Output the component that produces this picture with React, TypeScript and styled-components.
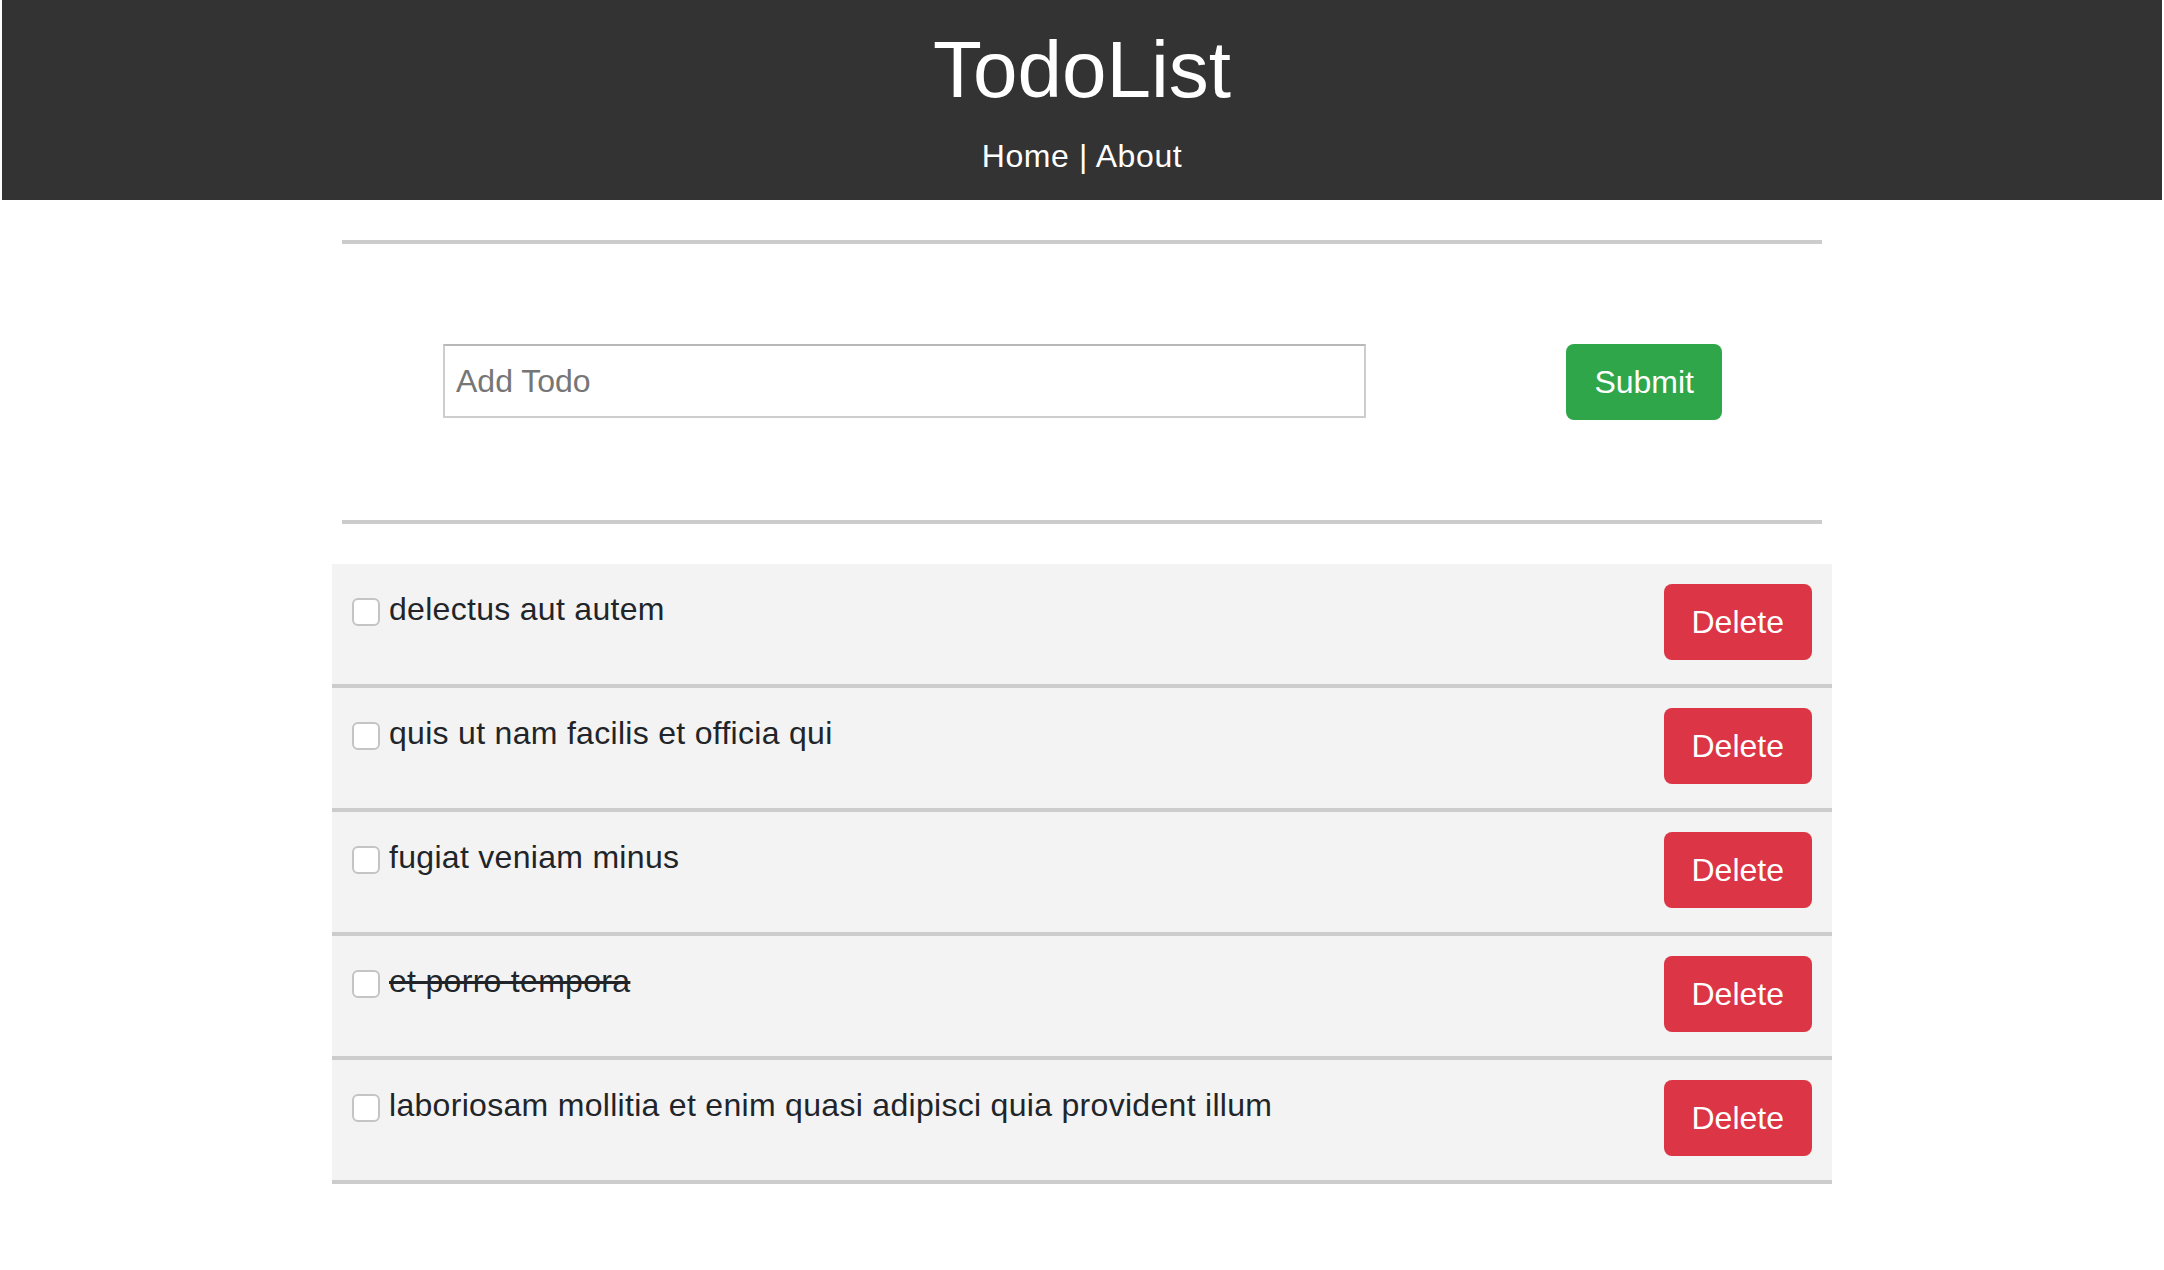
import React, { useState } from "react";
import styled, { createGlobalStyle } from "styled-components";

const GlobalStyle = createGlobalStyle`
  html, body {
    margin: 0;
    padding: 0;
    background: #ffffff;
  }
  body {
    font-family: "Liberation Sans", Arial, Helvetica, sans-serif;
    color: #212529;
  }
  * { box-sizing: border-box; }
`;

const Header = styled.header`
  margin: 0 2px;
  background: #333333;
  color: #ffffff;
  text-align: center;
  padding: 22px 0 20px;
`;

const Title = styled.h1`
  margin: 0 0 14px;
  font-size: 80px;
  line-height: 96px;
  font-weight: 400;
`;

const Nav = styled.nav`
  font-size: 32px;
  line-height: 48px;
  letter-spacing: 0.6px;
`;

const NavLink = styled.a`
  color: #ffffff;
  text-decoration: none;
`;

const Main = styled.main`
  width: 1500px;
  margin: 40px auto 0;
`;

const Rule = styled.hr`
  margin: 0 10px;
  height: 4px;
  border: none;
  background: #cccccc;
`;

const Form = styled.form`
  display: flex;
  justify-content: space-between;
  align-items: flex-start;
  padding: 100px 110px 100px 111px;
`;

const Input = styled.input`
  width: 923px;
  height: 74px;
  border: 2px solid #cdcdcd;
  border-top-color: #b8b8b8;
  padding: 0 11px;
  font-family: inherit;
  font-size: 32px;
  color: #212529;
  outline: none;
  &::placeholder {
    color: #767676;
  }
`;

const Button = styled.button<{ $variant: "success" | "danger" }>`
  height: 76px;
  padding: 0 26px;
  border: 2px solid transparent;
  border-radius: 8px;
  background: ${(p) => (p.$variant === "success" ? "#2fa64a" : "#dc3545")};
  color: #ffffff;
  font-family: inherit;
  font-size: 32px;
  line-height: 48px;
  cursor: pointer;
  flex-shrink: 0;
`;

const List = styled.ul`
  list-style: none;
  margin: 40px 0 0;
  padding: 0;
`;

const Row = styled.li`
  display: flex;
  justify-content: space-between;
  align-items: flex-start;
  height: 124px;
  padding: 20px 20px 0 20px;
  background: #f3f3f3;
  border-bottom: 4px solid #cccccc;
`;

const Item = styled.label`
  display: flex;
  align-items: flex-start;
  padding-top: 1px;
  font-size: 32px;
  line-height: 48px;
  letter-spacing: 0.3px;
`;

const Check = styled.input`
  appearance: none;
  -webkit-appearance: none;
  width: 28px;
  height: 28px;
  margin: 13px 9px 0 0;
  border: 2px solid #c4c4c4;
  border-radius: 6px;
  background: #ffffff;
  flex-shrink: 0;
`;

const ItemText = styled.span<{ $done: boolean }>`
  text-decoration: ${(p) => (p.$done ? "line-through" : "none")};
`;

type Todo = { id: number; title: string; completed: boolean };

const initialTodos: Todo[] = [
  { id: 1, title: "delectus aut autem", completed: false },
  { id: 2, title: "quis ut nam facilis et officia qui", completed: false },
  { id: 3, title: "fugiat veniam minus", completed: false },
  { id: 4, title: "et porro tempora", completed: true },
  {
    id: 5,
    title: "laboriosam mollitia et enim quasi adipisci quia provident illum",
    completed: false,
  },
];

export default function App() {
  const [todos, setTodos] = useState<Todo[]>(initialTodos);
  const [text, setText] = useState("");

  return (
    <>
      <GlobalStyle />
      <Header>
        <Title>TodoList</Title>
        <Nav>
          <NavLink href="#">Home</NavLink> | <NavLink href="#">About</NavLink>
        </Nav>
      </Header>
      <Main>
        <Rule />
        <Form
          onSubmit={(e) => {
            e.preventDefault();
            if (!text.trim()) return;
            setTodos([...todos, { id: Date.now(), title: text, completed: false }]);
            setText("");
          }}
        >
          <Input
            type="text"
            placeholder="Add Todo"
            value={text}
            onChange={(e) => setText(e.target.value)}
          />
          <Button type="submit" $variant="success">
            Submit
          </Button>
        </Form>
        <Rule />
        <List>
          {todos.map((t) => (
            <Row key={t.id}>
              <Item>
                <Check
                  type="checkbox"
                  onChange={() =>
                    setTodos(
                      todos.map((x) =>
                        x.id === t.id ? { ...x, completed: !x.completed } : x
                      )
                    )
                  }
                />
                <ItemText $done={t.completed}>{t.title}</ItemText>
              </Item>
              <Button
                type="button"
                $variant="danger"
                onClick={() => setTodos(todos.filter((x) => x.id !== t.id))}
              >
                Delete
              </Button>
            </Row>
          ))}
        </List>
      </Main>
    </>
  );
}
